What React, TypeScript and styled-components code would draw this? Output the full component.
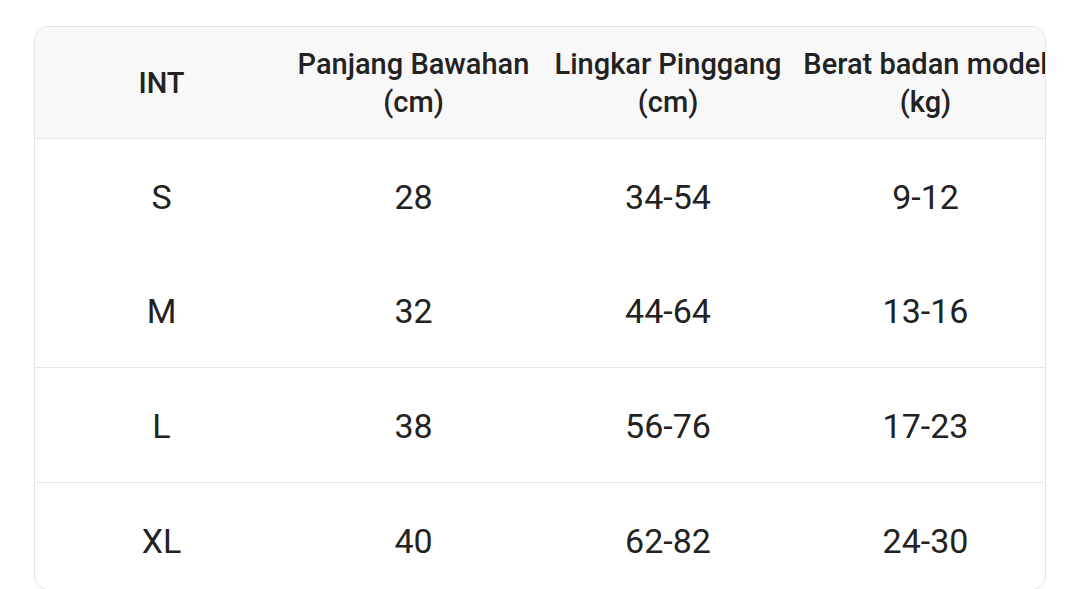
import React from "react";
import styled, { createGlobalStyle } from "styled-components";

const Global = createGlobalStyle`
  html, body { margin: 0; padding: 0; background: #ffffff; }
  body { font-family: Roboto, "Noto Sans", "Liberation Sans", sans-serif; color: #222222; }
`;

const Card = styled.div`
  margin: 26px 0 0 34px;
  width: 1010px;
  height: 562px;
  border: 1px solid #e6e6e6;
  border-radius: 14px;
  overflow: hidden;
  background: #ffffff;
`;

const cols = "253px 251px 258px 257px";

const HeaderRow = styled.div`
  display: grid;
  grid-template-columns: ${cols};
  height: 111px;
  background: #f8f8f8;
  border-bottom: 1px solid #e6e6e6;
`;

const HeadCell = styled.div`
  display: flex;
  align-items: center;
  justify-content: center;
  text-align: center;
  font-size: 29px;
  font-weight: 500;
  line-height: 38px;
  color: #222222;
  white-space: pre-line;
`;

const Row = styled.div<{ $divider?: boolean }>`
  display: grid;
  grid-template-columns: ${cols};
  height: 114px;
  flex-shrink: 0;
  border-bottom: ${(p) => (p.$divider ? "1px solid #e6e6e6" : "none")};
`;

const Cell = styled.div`
  display: flex;
  align-items: center;
  justify-content: center;
  padding-top: 1px;
  font-size: 34px;
  font-weight: 400;
  color: #222222;
`;

const headers = [
  "INT",
  "Panjang Bawahan\n(cm)",
  "Lingkar Pinggang\n(cm)",
  "Berat badan model\n(kg)",
];

const rows: { cells: string[]; divider: boolean }[] = [
  { cells: ["S", "28", "34-54", "9-12"], divider: false },
  { cells: ["M", "32", "44-64", "13-16"], divider: true },
  { cells: ["L", "38", "56-76", "17-23"], divider: true },
  { cells: ["XL", "40", "62-82", "24-30"], divider: false },
];

export default function App() {
  return (
    <>
      <Global />
      <Card>
        <HeaderRow>
          {headers.map((h) => (
            <HeadCell key={h}>{h}</HeadCell>
          ))}
        </HeaderRow>
        {rows.map((r) => (
          <Row key={r.cells[0]} $divider={r.divider}>
            {r.cells.map((c, i) => (
              <Cell key={i}>{c}</Cell>
            ))}
          </Row>
        ))}
      </Card>
    </>
  );
}
